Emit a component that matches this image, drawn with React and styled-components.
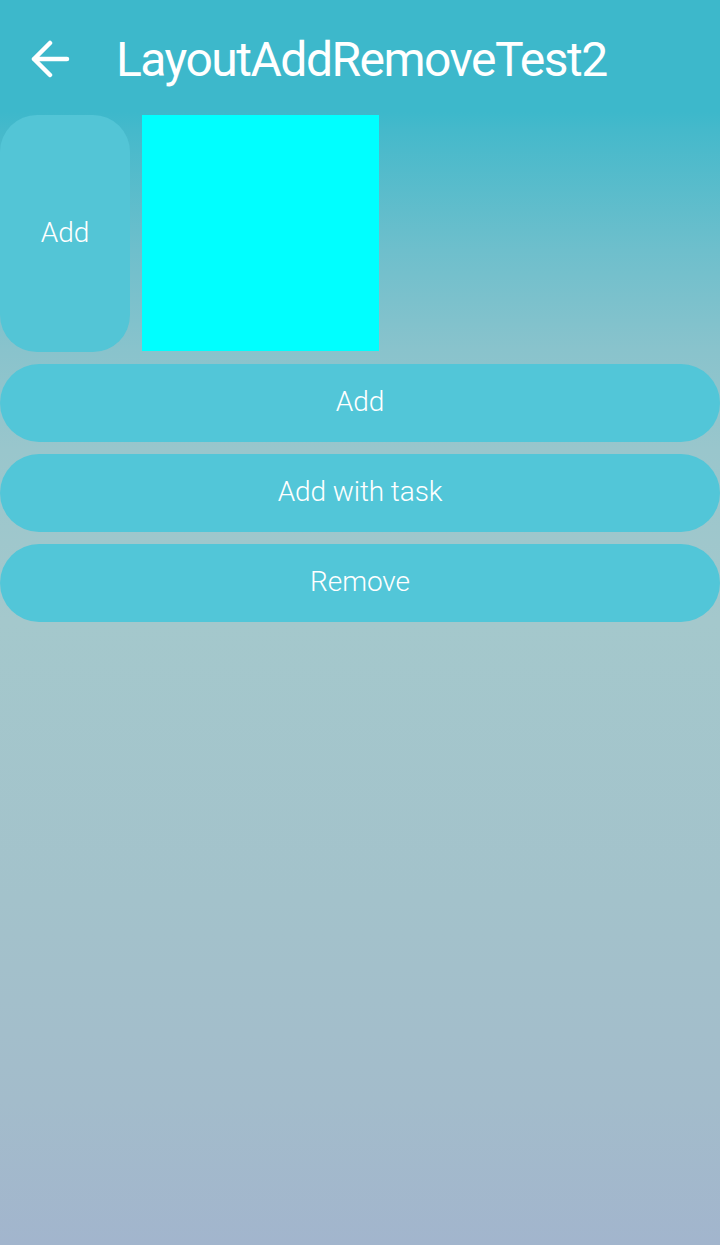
import React from "react";
import styled, { createGlobalStyle } from "styled-components";

const Global = createGlobalStyle`
  html, body { margin: 0; padding: 0; }
  body {
    width: 720px;
    min-height: 1245px;
    font-family: Roboto, "Open Sans", sans-serif;
    background: linear-gradient(
      to bottom,
      #3db8cb 0px,
      #3db8cb 112px,
      #45b9cb 130px,
      #6ebfcc 250px,
      #89c3cc 350px,
      #99c6cc 450px,
      #a4c8cc 620px,
      #a3c2cb 900px,
      #a3bccb 1100px,
      #a2b5cd 1245px
    );
    background-repeat: no-repeat;
  }
`;

const Page = styled.div`
  width: 720px;
  height: 1245px;
  display: flex;
  flex-direction: column;
`;

const Header = styled.header`
  height: 115px;
  display: flex;
  align-items: center;
  padding-left: 30px;
  box-sizing: border-box;
`;

const BackButton = styled.button`
  width: 40px;
  height: 40px;
  padding: 0;
  border: none;
  background: none;
  display: flex;
  align-items: center;
  justify-content: center;
  margin-right: 46px;
  margin-top: 4px;
`;

const Title = styled.h1`
  margin: 0;
  font-family: Roboto, sans-serif;
  font-weight: 400;
  font-size: 48px;
  letter-spacing: -1.5px;
  color: #ffffff;
  margin-top: 4px;
`;

const TopRow = styled.div`
  display: flex;
  gap: 12px;
  height: 237px;
`;

const SideButton = styled.button`
  width: 130px;
  height: 237px;
  border: none;
  border-radius: 37px;
  background: #53c5d6;
  color: #ffffff;
  font-family: Roboto, sans-serif;
  font-weight: 300;
  font-size: 28px;
  padding: 0 0 2px;
`;

const CyanBox = styled.div`
  width: 237px;
  height: 236px;
  background: #00ffff;
`;

const ButtonList = styled.div`
  display: flex;
  flex-direction: column;
  gap: 12px;
  margin-top: 12px;
`;

const WideButton = styled.button`
  width: 720px;
  height: 78px;
  border: none;
  border-radius: 39px;
  background: #52c6d8;
  color: #ffffff;
  font-family: Roboto, sans-serif;
  font-weight: 300;
  font-size: 28px;
  letter-spacing: -0.1px;
  padding: 0 0 3px;
`;

const BackArrow = () => (
  <svg width="40" height="40" viewBox="0 0 40 40">
    <path
      d="M4 19 H37 M4 19 L20 3 M4 19 L20 35"
      fill="none"
      stroke="#ffffff"
      strokeWidth="4.5"
      strokeLinecap="round"
      strokeLinejoin="round"
    />
  </svg>
);

export default function App() {
  return (
    <>
      <Global />
      <Page>
        <Header>
          <BackButton aria-label="Back">
            <BackArrow />
          </BackButton>
          <Title>LayoutAddRemoveTest2</Title>
        </Header>
        <TopRow>
          <SideButton>Add</SideButton>
          <CyanBox />
        </TopRow>
        <ButtonList>
          <WideButton>Add</WideButton>
          <WideButton>Add with task</WideButton>
          <WideButton>Remove</WideButton>
        </ButtonList>
      </Page>
    </>
  );
}
